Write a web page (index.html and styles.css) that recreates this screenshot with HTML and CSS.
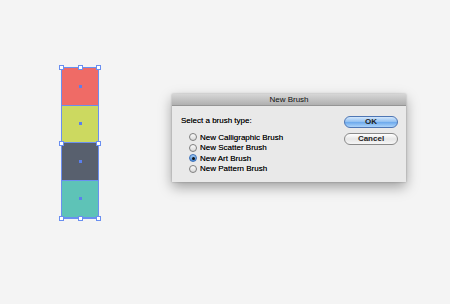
FILE: index.html
```html
<!DOCTYPE html>
<html lang="en">
<head>
    <meta charset="UTF-8">
    <title>New Brush</title>
    <link rel="stylesheet" href="styles.css">
</head>
<body>
    <main class="canvas">
        <div class="swatch-stack">
            <div class="swatch red"><span class="dot"></span></div>
            <div class="swatch lime"><span class="dot"></span></div>
            <div class="swatch slate"><span class="dot"></span></div>
            <div class="swatch teal"><span class="dot"></span></div>

            <span class="handle tl"></span>
            <span class="handle tm"></span>
            <span class="handle tr"></span>
            <span class="handle ml"></span>
            <span class="handle mr"></span>
            <span class="handle bl"></span>
            <span class="handle bm"></span>
            <span class="handle br"></span>
        </div>

        <section class="dialog">
            <div class="title-bar">New Brush</div>
            <div class="dialog-body">
                <div class="options">
                    <p class="prompt">Select a brush type:</p>
                    <ul class="radio-list">
                        <li><span class="radio"></span>New Calligraphic Brush</li>
                        <li><span class="radio"></span>New Scatter Brush</li>
                        <li><span class="radio checked"></span>New Art Brush</li>
                        <li><span class="radio"></span>New Pattern Brush</li>
                    </ul>
                </div>
                <div class="buttons">
                    <button class="btn primary">OK</button>
                    <button class="btn">Cancel</button>
                </div>
            </div>
        </section>
    </main>
</body>
</html>
```

FILE: styles.css
```css
* {
    margin: 0;
    padding: 0;
    box-sizing: border-box;
}

body {
    font-family: 'Liberation Sans', Arial, sans-serif;
    background: #f4f4f4;
    width: 450px;
    height: 304px;
    overflow: hidden;
}

.canvas {
    display: flex;
    align-items: flex-start;
    padding: 67px 0 0 61px;
}

/* Artwork column */
.swatch-stack {
    position: relative;
    width: 38px;
    border: 1px solid #6a8ff0;
    display: flex;
    flex-direction: column;
}

.swatch {
    height: 37.5px;
    display: flex;
    align-items: center;
    justify-content: center;
    border-bottom: 1px solid #6a8ff0;
}

.swatch:last-child {
    border-bottom: none;
}

.red { background: #ef6b66; }
.lime { background: #ccd960; }
.slate { background: #58606e; }
.teal { background: #5ec3b7; }

.dot {
    width: 3px;
    height: 3px;
    background: #5a7fee;
}

.handle {
    position: absolute;
    width: 5px;
    height: 5px;
    background: #fff;
    border: 1px solid #6a8ff0;
}

.tl { top: -3px; left: -3px; }
.tm { top: -3px; left: 16px; }
.tr { top: -3px; right: -3px; }
.ml { top: 73px; left: -3px; }
.mr { top: 73px; right: -3px; }
.bl { bottom: -3px; left: -3px; }
.bm { bottom: -3px; left: 16px; }
.br { bottom: -3px; right: -3px; }

/* Dialog */
.dialog {
    margin: 27px 0 0 73px;
    width: 234px;
    height: 88px;
    background: #e9e9e9;
    box-shadow: 0 5px 12px rgba(0, 0, 0, 0.35), 0 0 2px rgba(0, 0, 0, 0.25);
    display: flex;
    flex-direction: column;
}

.title-bar {
    height: 12px;
    background: linear-gradient(#d6d6d6, #b0b0b0);
    border-bottom: 1px solid #959595;
    font-size: 8px;
    line-height: 11px;
    text-align: center;
    color: #111;
}

.dialog-body {
    flex: 1;
    display: flex;
    justify-content: space-between;
    padding: 10px 8px 0 9px;
    color: #000;
    font-size: 8px;
    text-shadow: 0 0 0.4px rgba(0, 0, 0, 0.6);
}

.prompt {
    line-height: 10px;
    margin-bottom: 6px;
}

.radio-list {
    list-style: none;
    padding-left: 8px;
}

.radio-list li {
    display: flex;
    align-items: center;
    gap: 3px;
    height: 10.5px;
}

.radio {
    width: 8px;
    height: 8px;
    border-radius: 50%;
    border: 1px solid #7f7f7f;
    background: linear-gradient(#fbfbfb, #d8d8d8);
    display: flex;
    align-items: center;
    justify-content: center;
}

.radio.checked {
    border-color: #3a6fb8;
    background: linear-gradient(#a4ccf4, #4a8bd6);
}

.radio.checked::after {
    content: "";
    width: 3px;
    height: 3px;
    border-radius: 50%;
    background: #111;
}

.buttons {
    display: flex;
    flex-direction: column;
    gap: 5px;
}

.btn {
    width: 54px;
    height: 12px;
    border-radius: 6px;
    border: 1px solid #8a8a8a;
    background: linear-gradient(#ffffff, #e6e6e6 50%, #f6f6f6);
    font-family: inherit;
    font-size: 8px;
    font-weight: bold;
    color: #222;
    line-height: 10px;
}

.btn.primary {
    border-color: #4e76b4;
    background: linear-gradient(#d3e7fc, #8fbef0 50%, #6aa8ec 51%, #acd3f9);
}
```
